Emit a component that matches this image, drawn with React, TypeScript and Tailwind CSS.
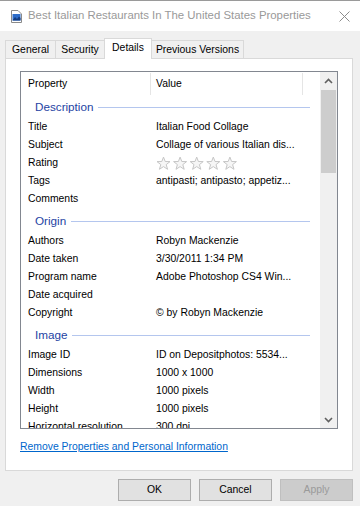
import React from "react";

type Row = [string, React.ReactNode];

interface Group {
  name: string;
  rows: Row[];
}

const Stars = () => (
  <svg width="84" height="15" viewBox="0 0 84 15">
    {[0, 1, 2, 3, 4].map((i) => (
      <path
        key={i}
        transform={`translate(${i * 16.6 + 0.5} 0.5)`}
        d="M7 0.6 L8.7 5 L13.5 5.1 L9.7 8.1 L11.1 12.8 L7 10.1 L2.9 12.8 L4.3 8.1 L0.5 5.1 L5.3 5 Z"
        fill="#f6f6f6"
        stroke="#c6c6c6"
        strokeWidth="1"
        strokeLinejoin="round"
      />
    ))}
  </svg>
);

const groups: Group[] = [
  {
    name: "Description",
    rows: [
      ["Title", "Italian Food Collage"],
      ["Subject", "Collage of various Italian dis..."],
      ["Rating", <Stars />],
      ["Tags", "antipasti; antipasto; appetiz..."],
      ["Comments", ""],
    ],
  },
  {
    name: "Origin",
    rows: [
      ["Authors", "Robyn Mackenzie"],
      ["Date taken", "3/30/2011 1:34 PM"],
      ["Program name", "Adobe Photoshop CS4 Win..."],
      ["Date acquired", ""],
      ["Copyright", "© by Robyn Mackenzie"],
    ],
  },
  {
    name: "Image",
    rows: [
      ["Image ID", "ID on Depositphotos: 5534..."],
      ["Dimensions", "1000 x 1000"],
      ["Width", "1000 pixels"],
      ["Height", "1000 pixels"],
      ["Horizontal resolution", "300 dpi"],
    ],
  },
];

const Chevron = ({ down }: { down?: boolean }) => (
  <svg width="9" height="6" viewBox="0 0 9 6" className={down ? "rotate-180" : ""}>
    <path d="M1 5 L4.5 1.5 L8 5" fill="none" stroke="#606060" strokeWidth="1.6" />
  </svg>
);

export default function App() {
  return (
    <div className="w-[360px] h-[506px] bg-[#f0f0f0] font-['Liberation_Sans',Arial,sans-serif] text-[10.4px] text-black overflow-hidden">
      {/* title bar */}
      <div className="h-[31px] bg-white border-t border-[#9a9a9a] flex items-center pl-[11px]">
        <svg width="11" height="13" viewBox="0 0 11 13">
          <path d="M0.5 0.5 H7 L10.5 4 V12.5 H0.5 Z" fill="#fff" stroke="#8a8a8a" />
          <rect x="1.5" y="4" width="8" height="6.5" fill="#2d6cc9" />
          <path d="M1.5 10.5 L4 7 L6 9 L8 6.5 L9.5 8 V10.5 Z" fill="#143d80" />
        </svg>
        <span className="ml-[6px] text-[11.4px] text-[#999999] leading-none">
          Best Italian Restaurants In The United States Properties
        </span>
        <svg width="11" height="11" viewBox="0 0 11 11" className="ml-auto mr-[10px]">
          <path d="M0.5 0.5 L10.5 10.5 M10.5 0.5 L0.5 10.5" stroke="#8c8c8c" strokeWidth="1" />
        </svg>
      </div>

      {/* tabs */}
      <div className="mt-[7px] h-[20px] flex items-end pl-[5px] relative z-10">
        <div className="w-[50px] h-[18px] border-l border-t border-[#d9d9d9] flex items-center justify-center">
          General
        </div>
        <div className="w-[49px] h-[18px] border-l border-t border-[#d9d9d9] flex items-center justify-center">
          Security
        </div>
        <div className="w-[48px] h-[21px] -mb-px bg-white border-l border-t border-r border-[#d9d9d9] flex items-center justify-center pb-[3px]">
          Details
        </div>
        <div className="w-[92px] h-[18px] border-t border-r border-[#d9d9d9] flex items-center justify-center">
          Previous Versions
        </div>
      </div>

      {/* panel */}
      <div className="ml-[5px] w-[348px] h-[413px] bg-white border border-[#d9d9d9] pt-[12px] px-[14px]">
        <div className="w-[318px] h-[358px] border border-[#828790] flex overflow-hidden">
          <div className="flex-1 pr-[10px]">
            <div className="h-[24px] flex items-stretch">
              <div className="w-[130px] pl-[7px] flex items-center border-r border-[#e5e5e5] my-px">Property</div>
              <div className="w-[152px] pl-[5px] flex items-center border-r border-[#e5e5e5] my-px">Value</div>
            </div>
            {groups.map((g, gi) => (
              <div key={g.name} className={gi > 0 ? "mt-[2px]" : ""}>
                <div className="h-[22px] flex items-center pl-[14px]">
                  <span className="text-[11.7px] text-[#2443a3] leading-none">{g.name}</span>
                  <div className="flex-1 h-px bg-[#b4c6ee] ml-[5px]" />
                </div>
                {g.rows.map(([label, value]) => (
                  <div key={label} className="h-[18px] flex items-center">
                    <div className="w-[135px] pl-[7px] whitespace-nowrap">{label}</div>
                    <div className="whitespace-nowrap flex items-center">{value}</div>
                  </div>
                ))}
              </div>
            ))}
          </div>
          {/* scrollbar */}
          <div className="w-[17px] bg-[#f0f0f0] flex flex-col">
            <div className="h-[17px] flex items-center justify-center">
              <Chevron />
            </div>
            <div className="mt-px mx-px h-[83px] bg-[#cdcdcd]" />
            <div className="flex-1" />
            <div className="h-[17px] flex items-center justify-center">
              <Chevron down />
            </div>
          </div>
        </div>
        <div className="mt-[11px] leading-[13px]">
          <span className="text-[#0066cc] underline">Remove Properties and Personal Information</span>
        </div>
      </div>

      {/* buttons */}
      <div className="mt-[8px] flex justify-end gap-[8px] pr-[7px]">
        <button className="w-[73px] h-[22px] bg-[#e1e1e1] border border-[#adadad]">OK</button>
        <button className="w-[73px] h-[22px] bg-[#e1e1e1] border border-[#adadad]">Cancel</button>
        <button className="w-[73px] h-[22px] bg-[#cccccc] border border-[#bfbfbf] text-[#9a9a9a]">Apply</button>
      </div>
    </div>
  );
}
